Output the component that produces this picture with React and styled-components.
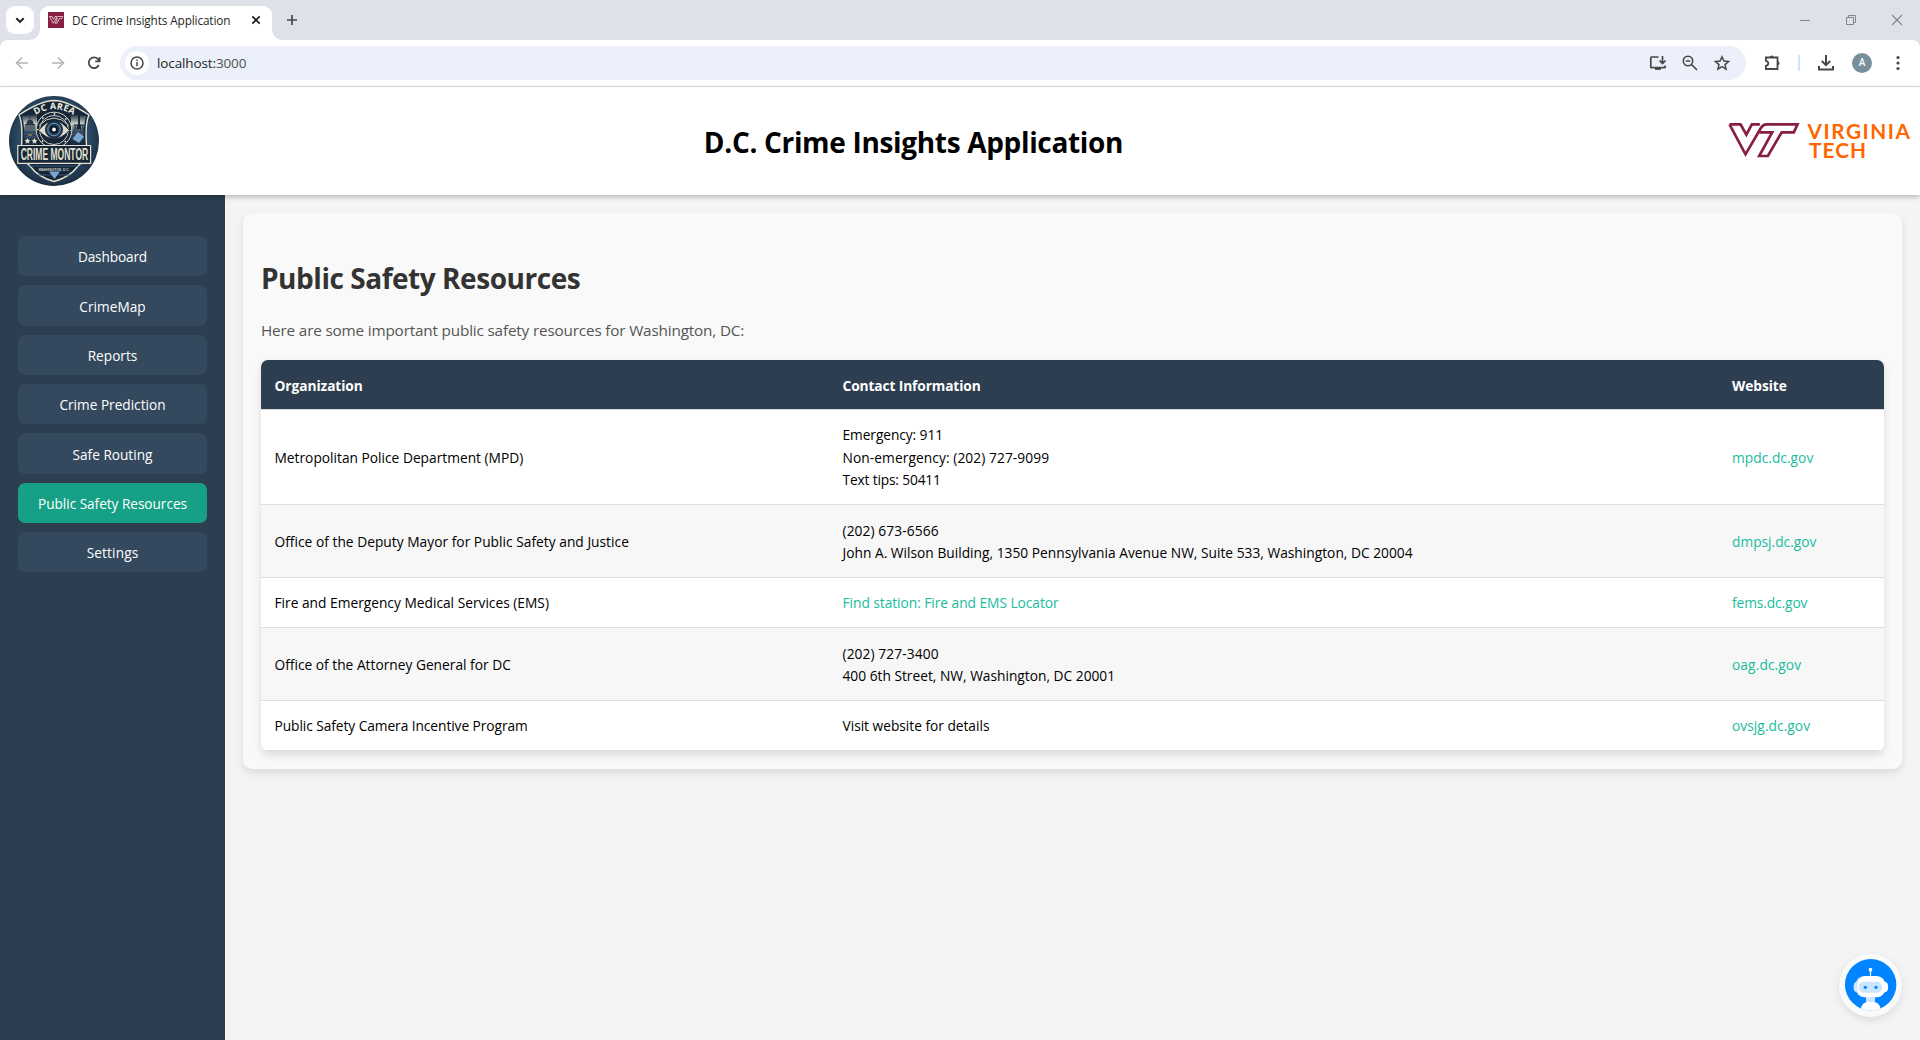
import React from "react";
import styled, { createGlobalStyle } from "styled-components";

const GlobalStyle = createGlobalStyle`
  * { box-sizing: border-box; }
  body {
    margin: 0;
    background: #f4f4f4;
    color: #000;
    font-family: "Open Sans", "Noto Sans", "Segoe UI", sans-serif;
    font-size: 13.75px;
    overflow: hidden;
  }
  svg { display: block; flex: none; overflow: visible; }
`;

const Page = styled.div`
  display: flex;
  flex-direction: column;
  height: 1040px;
`;

/* Browser chrome */

const TabStrip = styled.div`
  display: flex;
  align-items: flex-end;
  height: 40px;
  padding-left: 6px;
  background: #dee1e8;
`;

const TabSearch = styled.div`
  display: flex;
  align-items: center;
  justify-content: center;
  width: 28px;
  height: 28px;
  margin: 0 6px 6px 0;
  border-radius: 9px;
  background: #fff;
`;

const Tab = styled.div`
  position: relative;
  display: flex;
  align-items: center;
  width: 232px;
  height: 34px;
  padding: 0 9px 6px 8px;
  border-radius: 9px 9px 0 0;
  background: #fff;

  &::before,
  &::after {
    content: "";
    position: absolute;
    bottom: 0;
    width: 10px;
    height: 10px;
  }
  &::before {
    left: -10px;
    background: radial-gradient(circle at 0 0, transparent 9.5px, #fff 10px);
  }
  &::after {
    right: -10px;
    background: radial-gradient(circle at 100% 0, transparent 9.5px, #fff 10px);
  }
`;

const TabTitle = styled.span`
  flex: 1;
  margin-left: 8px;
  font-size: 11.8px;
  line-height: 18px;
  letter-spacing: -0.13px;
  color: #1f1f1f;
  white-space: nowrap;
`;

const NewTab = styled.div`
  display: flex;
  margin: 0 auto 13px 13px;
`;

const WindowButtons = styled.div`
  display: flex;
  gap: 32px;
  margin: 0 16px 13px 0;
`;

const Toolbar = styled.div`
  display: flex;
  align-items: center;
  gap: 16px;
  height: 47px;
  padding: 0 12px 1px;
  border-bottom: 1px solid #dcdddf;
  border-radius: 8px 8px 0 0;
  background: #fff;
  flex: none;
`;

const ToolbarBack = styled.div`
  background: linear-gradient(#dee1e8 10px, #fff 10px);
`;

const Omnibox = styled.div`
  display: flex;
  flex: 1;
  align-items: center;
  gap: 12px;
  height: 34px;
  padding: 0 14px 0 5px;
  border-radius: 17px;
  background: #ebf0fa;
`;

const SiteInfo = styled.div`
  display: flex;
  align-items: center;
  justify-content: center;
  width: 24px;
  height: 24px;
  border-radius: 50%;
  background: #fff;
`;

const Url = styled.span`
  flex: 1;
  margin-left: -4px;
  font-size: 13.5px;
  line-height: 20px;
  letter-spacing: -0.12px;
  color: #1f1f1f;
`;

const Port = styled.span`
  color: #4d5055;
`;

const Separator = styled.div`
  width: 2px;
  height: 16px;
  background: #d3e3fd;
`;

const Avatar = styled.div`
  width: 20px;
  height: 20px;
  border-radius: 50%;
  background: #78909c;
  color: #fff;
  font: 500 10px/20px Roboto, sans-serif;
  text-align: center;
`;

/* Application */

const Header = styled.header`
  position: relative;
  z-index: 1;
  display: flex;
  flex: none;
  align-items: center;
  justify-content: space-between;
  height: 108px;
  padding: 9px;
  background: #fff;
  box-shadow: 0 2px 5px rgba(0, 0, 0, 0.25);
`;

const Title = styled.h1`
  margin: 0;
  padding-top: 2px;
  font-size: 28px;
  line-height: 40px;
  font-weight: 700;
  letter-spacing: -0.33px;
`;

const Body = styled.div`
  display: flex;
  flex: 1;
`;

const Sidebar = styled.nav`
  display: flex;
  flex-direction: column;
  gap: 9px;
  width: 225px;
  padding: 41px 18px 0;
  background: #2c3e50;
`;

const NavButton = styled.button`
  height: 40.35px;
  padding: 2px 0 0;
  border: 0;
  border-radius: 7px;
  background: ${(p) => (p.$active ? "#16a085" : "#34495e")};
  color: #fff;
  font-family: inherit;
  font-size: 13.65px;
  line-height: 22px;
  letter-spacing: ${(p) => p.$spacing || 0}px;
`;

const Main = styled.main`
  flex: 1;
  padding: 18px;
`;

const Card = styled.section`
  width: 1659px;
  height: 556px;
  padding: 18px;
  border-radius: 9px;
  background: #f9f9f9;
  box-shadow: 0 4px 9px rgba(0, 0, 0, 0.1);
`;

const Heading = styled.h2`
  margin: 27px 0 20px;
  color: #333;
  font-size: 28px;
  line-height: 40px;
  letter-spacing: -0.46px;
`;

const Intro = styled.p`
  margin: 0 0 18px;
  color: #555;
  font-size: 15.3px;
  line-height: 24px;
  letter-spacing: -0.175px;
`;

const Table = styled.table`
  width: 1623px;
  table-layout: fixed;
  border-spacing: 0;
  border-radius: 7px;
  overflow: hidden;
  background: #fff;
  box-shadow: 0 4px 9px rgba(0, 0, 0, 0.12);
`;

const Column = styled.col`
  width: ${(p) => p.$width}px;
`;

const Row = styled.tr`
  height: ${(p) => p.$height}px;
  &:nth-child(even) td { background: #f7f7f7; }
`;

const Th = styled.th`
  padding: 2px 13.5px 0;
  border-bottom: 1px solid #ddd;
  background: #2c3e50;
  color: #fff;
  line-height: 22px;
  text-align: left;
  letter-spacing: ${(p) => p.$spacing || 0}px;
`;

const Td = styled.td`
  padding: 2px 13.5px 0;
  border-bottom: 1px solid #ddd;
`;

const Line = styled.div`
  line-height: 22.5px;
  white-space: nowrap;
  letter-spacing: ${(p) => p.$spacing || 0}px;
`;

const Link = styled.a`
  color: #1abc9c;
`;

const ChatButton = styled.div`
  position: fixed;
  right: 18px;
  bottom: 23px;
  width: 63px;
  height: 63px;
  border-radius: 50%;
  background: #fafafa;
  box-shadow: 0 3px 9px rgba(0, 0, 0, 0.1);
`;

/* Drawings */

const Icon = ({ size = 20, view = 20, color = "#474747", width = 1.8, children }) => (
  <svg width={size} height={size} viewBox={`0 0 ${view} ${view}`} fill="none" stroke={color} strokeWidth={width}>
    {children}
  </svg>
);

const Favicon = () => (
  <svg width="16" height="16" viewBox="0 0 16 16">
    <path d="M0 0H16V16H0Z" fill="#861f41" />
    <path d="M1.5 4.5H4L5.5 7.2 7 4.5H9M1.5 4.5L5.2 11.3 8.7 5.5Q9.2 4.5 10.2 4.5H14.7L13.7 6.6H11.4L9 11.3H7.2L9.5 6.6H8.3" fill="none" stroke="#fff" strokeWidth=".8" opacity=".85" />
  </svg>
);

const CrimeMonitorLogo = () => (
  <svg width="90" height="90" viewBox="0 0 90 90">
    <defs>
      <radialGradient id="badge" cx=".5" cy=".45" r=".55">
        <stop offset="0" stopColor="#2f4f6b" />
        <stop offset=".7" stopColor="#2b4a66" />
        <stop offset="1" stopColor="#1c2e40" />
      </radialGradient>
      <linearGradient id="sky" x1="0" y1="0" x2="0" y2="1">
        <stop offset="0" stopColor="#132638" />
        <stop offset=".3" stopColor="#c9cdc5" />
        <stop offset=".55" stopColor="#34495c" />
        <stop offset="1" stopColor="#13263a" />
      </linearGradient>
      <path id="arc" d="M26.500 19Q45 7.500 64.500 19" />
    </defs>
    <circle cx="45" cy="45" r="45" fill="url(#badge)" />
    <path d="M10 19Q31 5 45 4.500Q59 5 80 19Q76 27 77.500 50V62L69 70Q61 81 45 85.500Q29 81 21 70L12.500 62V50Q14 27 10 19Z" fill="#142638" stroke="#e6e2cf" strokeWidth="1.400" />
    <path d="M13 20L28 18V50H15Q16 30 13 20ZM62 18L77 20Q74 30 75 50H62Z" fill="url(#sky)" />
    <path d="M15 35H27M15 41H27M63 41H75M15 38H27M63 38H75" stroke="#4a6a86" strokeWidth=".7" />
    <path d="M16 33H26V28H24.500Q24.500 24 21 23.500Q17.500 24 17.500 28H16ZM20.600 20H21.400V24H20.600Z" fill="#26384a" />
    <path d="M17 29V33M19 29V33M21 29V33M23 29V33M25 29V33" stroke="#c8ccc5" strokeWidth=".6" />
    <path d="M69 17H71V33H69Z" fill="#17293b" />
    <path d="M65 29H75M66 29V34M68.500 29V34M71.500 29V34M74 29V34" stroke="#17293b" strokeWidth="1.200" />
    <path d="M19 39H23" stroke="#b79664" strokeWidth="1" />
    <path d="M18.500 42.500l.8 1.600 1.700.2-1.200 1.200.3 1.700-1.600-.8-1.600.8.300-1.700-1.200-1.200 1.700-.2zM25.500 42.500l.8 1.600 1.700.2-1.200 1.200.3 1.700-1.600-.8-1.600.8.300-1.700-1.200-1.200 1.700-.2z" fill="#e6e2cf" stroke="#e6e2cf" strokeWidth=".4" />
    <path d="M69 36L75 40.500 70 47 63.500 43Z" fill="#7da6d2" />
    <circle cx="45" cy="34" r="17.800" fill="#142638" stroke="#d9d8ca" strokeWidth="1" />
    <circle cx="45" cy="34" r="14.500" fill="none" stroke="#c9cbc2" strokeWidth="1" />
    <circle cx="45" cy="34" r="16.200" fill="none" stroke="#e6e2cf" strokeWidth="1.700" strokeDasharray="1.500 11.220" strokeDashoffset=".7" />
    <path d="M29.500 34.500Q45 15 60.500 34.500Q45 51 29.500 34.500Z" fill="#ddd9c7" stroke="#16283a" strokeWidth="1" />
    <path d="M30 29.500Q45 14.500 60 29.500" fill="none" stroke="#e6e2cf" strokeWidth=".9" />
    <circle cx="45" cy="33.500" r="8.500" fill="#1f3e5c" stroke="#101f2e" />
    <circle cx="45" cy="33.500" r="6.200" fill="none" stroke="#7fa0bd" strokeWidth=".9" />
    <circle cx="45" cy="33.500" r="4" fill="#0c1926" />
    <circle cx="45" cy="33.500" r="1.900" fill="#fff" />
    <text fill="#f1eee0" fontFamily="Open Sans, sans-serif" fontSize="9" fontWeight="700">
      <textPath href="#arc" textLength="40">DC AREA</textPath>
    </text>
    <path d="M8.800 49.500H81.600V67.300H8.800Z" fill="#16283a" stroke="#e6e2cf" strokeWidth="1.200" />
    <text x="11.700" y="64.400" textLength="67.500" lengthAdjust="spacingAndGlyphs" fill="#e6e2cf" fontFamily="Liberation Sans, sans-serif" fontSize="16" fontWeight="700">CRIME MONTOR</text>
    <path d="M21 70H69M29 79H61" stroke="#36597a" strokeWidth="1" />
    <text x="29.500" y="74.600" textLength="31" lengthAdjust="spacingAndGlyphs" fill="#d5d5c8" fontFamily="Liberation Sans, sans-serif" fontSize="4.200" fontWeight="700">WASHINGTON, D.C.</text>
    <path d="M40 75.500H51L45.500 83Z" fill="#7da6d2" />
  </svg>
);

const VirginiaTechLogo = () => (
  <svg width="183" height="36" viewBox="1727 123 183 36">
    <g transform="translate(1721.200 118) scale(.3333)" fill="none" stroke="#861f41" strokeWidth="8">
      <path d="M22 19H55L72.500 50 89 19H113" />
      <path d="M22 19L70 109 116 30Q122 19 135 19H226L215 43H178.500L137 114H111L150 43H112" />
    </g>
    <g fill="#ff6600" fontFamily="Lato, sans-serif" fontSize="20.800" fontWeight="700">
      <text x="1806.500" y="139" textLength="102.500">VIRGINIA</text>
      <text x="1808" y="158" textLength="57">TECH</text>
    </g>
  </svg>
);

const Robot = () => (
  <svg width="63" height="63" viewBox="-3 -3 189 189">
    <clipPath id="disc"><circle cx="92" cy="89" r="77" /></clipPath>
    <g clipPath="url(#disc)">
      <path d="M0 0H186V186H0Z" fill="#0084ff" />
      <path d="M91.500 45V68" stroke="#fff" strokeWidth="3.500" />
      <circle cx="91.500" cy="44" r="5.500" fill="#fff" />
      <rect x="41" y="80" width="24" height="32" rx="12" fill="#cce6ff" />
      <rect x="120" y="80" width="24" height="32" rx="12" fill="#fff" />
      <rect x="78" y="120" width="27" height="26" fill="#cce6ff" />
      <rect x="47" y="63" width="84" height="64" rx="26" fill="#cce6ff" />
      <rect x="52" y="63" width="84" height="64" rx="26" fill="#fff" />
      <rect x="56" y="80" width="70" height="33" rx="15" fill="#cce6ff" />
      <circle cx="76" cy="97" r="5" fill="#0084ff" />
      <circle cx="108" cy="97" r="5" fill="#0084ff" />
      <path d="M62 170V162Q66 141 84 141H100Q118 141 122 162V170Z" fill="#fff" />
    </g>
  </svg>
);

const NAV = [
  { label: "Dashboard", spacing: -0.14 },
  { label: "CrimeMap", spacing: 0.03 },
  { label: "Reports" },
  { label: "Crime Prediction" },
  { label: "Safe Routing" },
  { label: "Public Safety Resources", spacing: -0.04, active: true },
  { label: "Settings", spacing: 0.14 },
];

const RESOURCES = [
  {
    height: 95,
    name: ["Metropolitan Police Department (MPD)"],
    contact: [["Emergency: 911", -0.08], ["Non-emergency: (202) 727-9099", 0.08], ["Text tips: 50411", -0.16]],
    site: ["mpdc.dc.gov", 0.03],
  },
  {
    height: 73,
    name: ["Office of the Deputy Mayor for Public Safety and Justice", 0.02],
    contact: [
      ["(202) 673-6566", 0.1],
      ["John A. Wilson Building, 1350 Pennsylvania Avenue NW, Suite 533, Washington, DC 20004", 0.01],
    ],
    site: ["dmpsj.dc.gov"],
  },
  {
    height: 50,
    name: ["Fire and Emergency Medical Services (EMS)"],
    contact: [["Find station: Fire and EMS Locator", -0.04]],
    contactIsLink: true,
    site: ["fems.dc.gov", -0.1],
  },
  {
    height: 73,
    name: ["Office of the Attorney General for DC"],
    contact: [["(202) 727-3400", 0.1], ["400 6th Street, NW, Washington, DC 20001"]],
    site: ["oag.dc.gov", 0.1],
  },
  {
    height: 50,
    name: ["Public Safety Camera Incentive Program", -0.07],
    contact: [["Visit website for details", -0.02]],
    site: ["ovsjg.dc.gov", 0.05],
  },
];

const BrowserChrome = () => (
  <>
    <TabStrip>
      <TabSearch>
        <Icon size={12} view={12} color="#1f1f1f" width={2}><path d="M2.300 4.200L6 7.900 9.700 4.200" /></Icon>
      </TabSearch>
      <Tab>
        <Favicon />
        <TabTitle>DC Crime Insights Application</TabTitle>
        <Icon size={14} view={14} color="#1f1f1f" width={1.7}><path d="M3.300 3.300L10.700 10.700M10.700 3.300L3.300 10.700" /></Icon>
      </Tab>
      <NewTab>
        <Icon size={14} view={14} color="#474747" width={1.7}><path d="M7 2V12M2 7H12" /></Icon>
      </NewTab>
      <WindowButtons>
        <Icon size={14} view={14} color="#848688" width={1}><path d="M2 7.500H12" /></Icon>
        <Icon size={14} view={14} color="#848688" width={1}><path d="M2.500 4.500H9.500V11.500H2.500ZM4.500 4.500V2.500H11.500V9.500H9.500" /></Icon>
        <Icon size={14} view={14} color="#848688" width={1.1}><path d="M2 2L12 12M12 2L2 12" /></Icon>
      </WindowButtons>
    </TabStrip>
    <ToolbarBack>
      <Toolbar>
        <Icon color="#b4b6b8" width={1.6}><path d="M16 10H5M10 4.500L4.500 10 10 15.500" /></Icon>
        <Icon color="#b4b6b8" width={1.6}><path d="M4 10H15M10 4.500L15.500 10 10 15.500" /></Icon>
        <Icon width={1.8}><path d="M14.800 12A5.300 5.300 0 1 1 14 6.200L15.500 8M15.600 4V8.300H11.200" /></Icon>
        <Omnibox>
          <SiteInfo>
            <Icon size={16} view={16} width={1.5}><circle cx="8" cy="8" r="6" /><path d="M8 7V11.300M8 4.600V6.100" /></Icon>
          </SiteInfo>
          <Url>localhost:<Port>3000</Port></Url>
          <Icon width={1.7}><path d="M10.500 4H3.500Q2.800 4 2.800 4.700V14Q2.800 14.700 3.500 14.700H16.500Q17.200 14.700 17.200 14V12.500M14.500 3V10M11.500 7.500L14.500 10.500 17.500 7.500" /><path d="M7 15.700H13" strokeWidth="2.400" /></Icon>
          <Icon width={1.6}><circle cx="8" cy="8" r="4.700" /><path d="M11.500 11.500L17 17M5.800 8H10.200" /></Icon>
          <Icon width={1.5}><path d="M10 3.800L11.900 8.100 16.500 8.500 13 11.600 14.100 16.200 10 13.700 5.900 16.200 7 11.600 3.500 8.500 8.100 8.100Z" /></Icon>
        </Omnibox>
        <Icon width={1.8}><path d="M3.900 4.500H15.500V16H3.900V12.800Q6.300 12.300 6.300 10.300T3.900 7.800Z" /><path d="M7.700 4.500A2 2 0 0 1 11.700 4.500ZM15.500 8.200A2 2 0 0 1 15.500 12.200Z" fill="#474747" stroke="none" /></Icon>
        <Separator />
        <Icon width={2}><path d="M10 2V12M5.800 8L10 12.200 14.200 8M3 13V16.500H17V13" /></Icon>
        <Avatar>A</Avatar>
        <Icon color="none">
          <g fill="#474747"><circle cx="10" cy="4.500" r="1.600" /><circle cx="10" cy="10" r="1.600" /><circle cx="10" cy="15.500" r="1.600" /></g>
        </Icon>
      </Toolbar>
    </ToolbarBack>
  </>
);

const ResourceRow = ({ resource }) => {
  const { height, name, contact, contactIsLink, site } = resource;
  return (
    <Row $height={height}>
      <Td><Line $spacing={name[1]}>{name[0]}</Line></Td>
      <Td>
        {contact.map(([text, spacing]) => (
          <Line key={text} $spacing={spacing}>{contactIsLink ? <Link>{text}</Link> : text}</Line>
        ))}
      </Td>
      <Td><Line $spacing={site[1]}><Link>{site[0]}</Link></Line></Td>
    </Row>
  );
};

export default function App() {
  return (
    <Page>
      <GlobalStyle />
      <BrowserChrome />
      <Header>
        <CrimeMonitorLogo />
        <Title>D.C. Crime Insights Application</Title>
        <VirginiaTechLogo />
      </Header>
      <Body>
        <Sidebar>
          {NAV.map((item) => (
            <NavButton key={item.label} $active={item.active} $spacing={item.spacing}>{item.label}</NavButton>
          ))}
        </Sidebar>
        <Main>
          <Card>
            <Heading>Public Safety Resources</Heading>
            <Intro>Here are some important public safety resources for Washington, DC:</Intro>
            <Table>
              <colgroup>
                <Column $width={568} />
                <Column $width={889.5} />
                <Column $width={165.5} />
              </colgroup>
              <thead>
                <Row $height={50}>
                  <Th $spacing={-0.08}>Organization</Th>
                  <Th $spacing={-0.12}>Contact Information</Th>
                  <Th $spacing={-0.08}>Website</Th>
                </Row>
              </thead>
              <tbody>
                {RESOURCES.map((resource) => (
                  <ResourceRow key={resource.name[0]} resource={resource} />
                ))}
              </tbody>
            </Table>
          </Card>
        </Main>
      </Body>
      <ChatButton><Robot /></ChatButton>
    </Page>
  );
}
